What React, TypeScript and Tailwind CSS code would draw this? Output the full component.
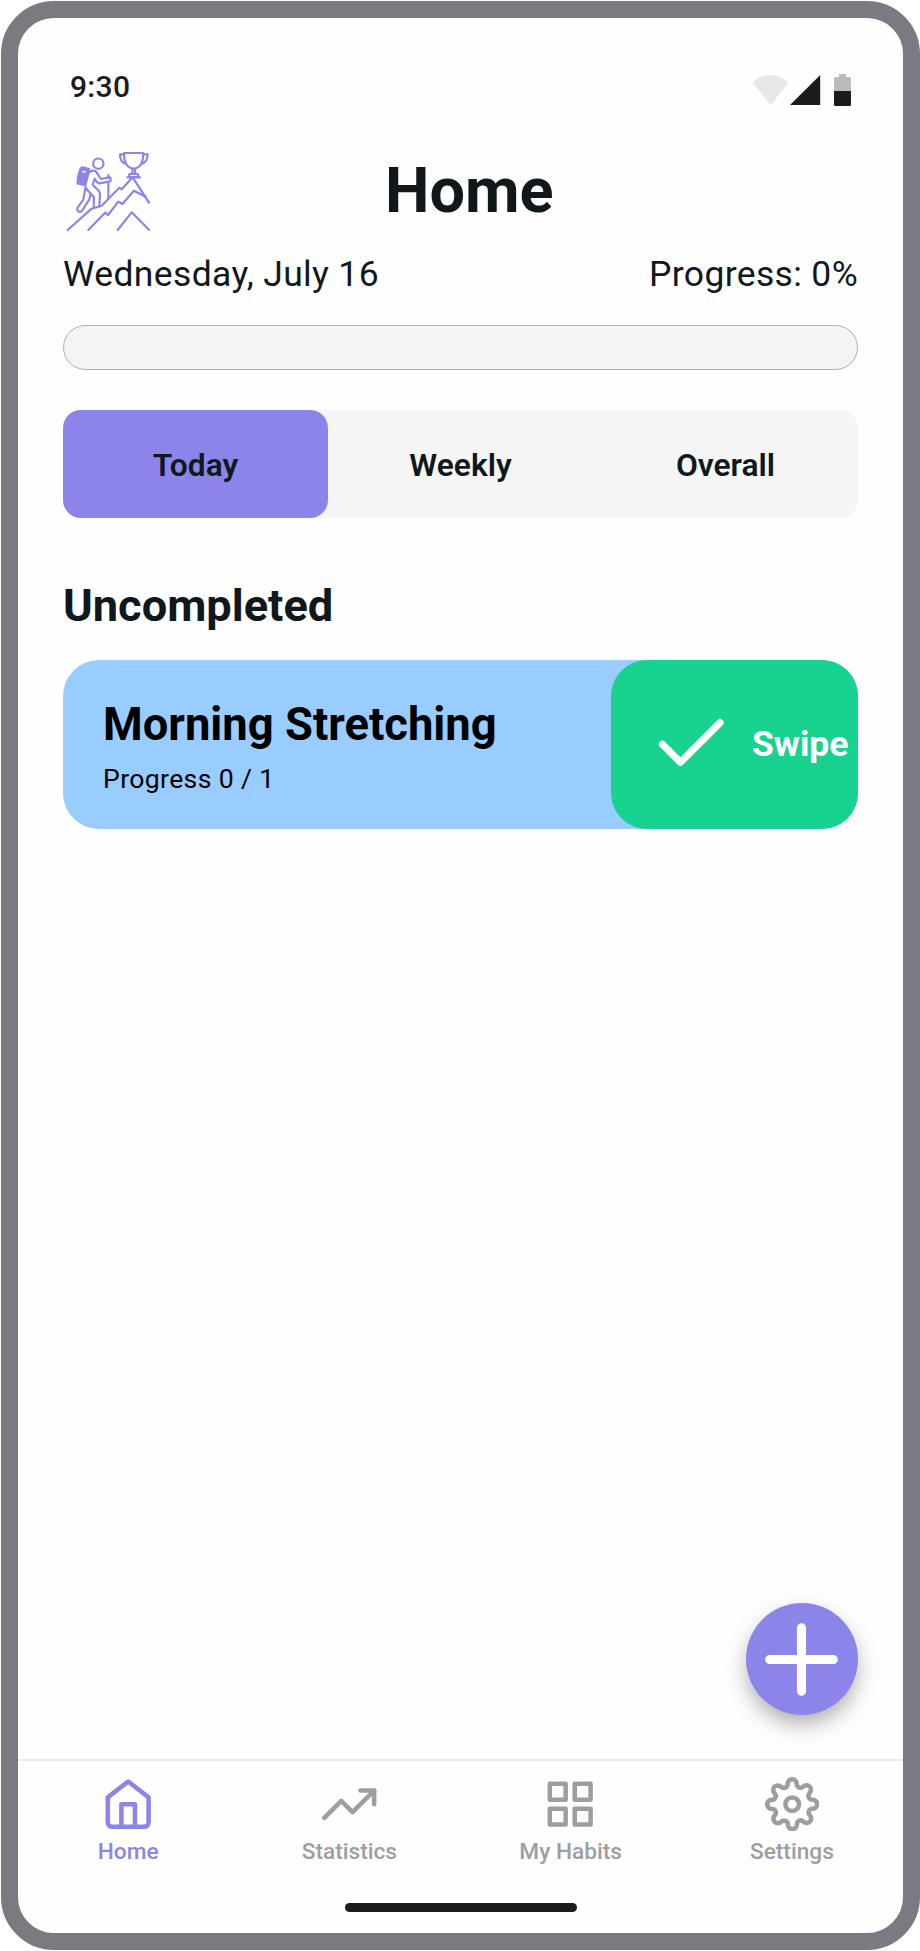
import type { ReactNode } from "react";

function HikerLogo() {
  return (
    <svg className="h-[95px] w-[95px] shrink-0 text-[#8b85ea]" viewBox="0 0 285 285" fill="none" stroke="currentColor" strokeWidth="6.5" strokeLinecap="round" strokeLinejoin="round">
      <path d="M23 255 95 191 125 182 178 128 185 133 218 97 267 173" />
      <path d="M85 255 135 203 144 210 175 170 187 177 222 137 257 155" />
      <path d="M173 255 215 202 267 254" />
      <path d="M192 24h58c0 26-7 45-29 47-22-2-29-21-29-47z" />
      <path d="M192 28h-12c0 15 5 26 18 28M250 28h13c0 15-6 26-19 28" />
      <path d="M217 72v14M225 72v14M208 87h26v9h-26zM202 97h38" />
      <circle cx="115" cy="56" r="15.5" />
      <path d="M145 90v8M145 112v48" />
      <path d="M68 67 87 72 74 120 53 115Q52 98 60 76 62 67 68 67z" fill="currentColor" />
      <path d="M68 79l8 2" stroke="#fff" strokeWidth="4" />
      <path d="M86 84c5-9 20-10 24-1l13 19 24-5c7 0 7 12 0 13l-29 5c-5 0-9-5-14-14l-6 18 18 18c4 4 4 8 4 12l-2 35M86 84 76 120c-1 8 2 11 6 15l20 22-1 32" />
      <path d="M76 131 70 163 53 188c-6 11 8 17 14 8l21-33 4-17" />
    </svg>
  );
}

function Icon({ children, className }: { children: ReactNode; className: string }) {
  return (
    <svg className={className} viewBox="0 0 24 24" fill="none" stroke="currentColor" strokeWidth="2" strokeLinecap="round" strokeLinejoin="round">
      {children}
    </svg>
  );
}

const navItems = [
  {
    label: "Home",
    color: "text-[#8b85ea]",
    icon: (
      <>
        <path d="m3 9 9-7 9 7v11a2 2 0 0 1-2 2H5a2 2 0 0 1-2-2z" />
        <polyline points="9 22 9 12 15 12 15 22" />
      </>
    ),
  },
  {
    label: "Statistics",
    color: "text-[#9e9e9e]",
    icon: (
      <>
        <polyline points="23 6 13.5 15.5 8.5 10.5 1 18" />
        <polyline points="17 6 23 6 23 12" />
      </>
    ),
  },
  {
    label: "My Habits",
    color: "text-[#9e9e9e]",
    icon: (
      <>
        <rect x="3" y="3" width="7" height="7" />
        <rect x="14" y="3" width="7" height="7" />
        <rect x="14" y="14" width="7" height="7" />
        <rect x="3" y="14" width="7" height="7" />
      </>
    ),
  },
  {
    label: "Settings",
    color: "text-[#9e9e9e]",
    icon: (
      <>
        <circle cx="12" cy="12" r="3" />
        <path d="M19.4 15a1.65 1.65 0 0 0 .33 1.82l.06.06a2 2 0 0 1 0 2.83 2 2 0 0 1-2.83 0l-.06-.06a1.65 1.65 0 0 0-1.82-.33 1.65 1.65 0 0 0-1 1.51V21a2 2 0 0 1-2 2 2 2 0 0 1-2-2v-.09A1.65 1.65 0 0 0 9 19.4a1.65 1.65 0 0 0-1.82.33l-.06.06a2 2 0 0 1-2.83 0 2 2 0 0 1 0-2.83l.06-.06a1.65 1.65 0 0 0 .33-1.82 1.65 1.65 0 0 0-1.51-1H3a2 2 0 0 1-2-2 2 2 0 0 1 2-2h.09A1.65 1.65 0 0 0 4.6 9a1.65 1.65 0 0 0-.33-1.82l-.06-.06a2 2 0 0 1 0-2.83 2 2 0 0 1 2.83 0l.06.06a1.65 1.65 0 0 0 1.82.33H9a1.65 1.65 0 0 0 1-1.51V3a2 2 0 0 1 2-2 2 2 0 0 1 2 2v.09a1.65 1.65 0 0 0 1 1.51 1.65 1.65 0 0 0 1.82-.33l.06-.06a2 2 0 0 1 2.83 0 2 2 0 0 1 0 2.83l-.06.06a1.65 1.65 0 0 0-.33 1.82V9a1.65 1.65 0 0 0 1.51 1H21a2 2 0 0 1 2 2 2 2 0 0 1-2 2h-.09a1.65 1.65 0 0 0-1.51 1z" />
      </>
    ),
  },
];

export default function App() {
  return (
    <div className="h-[1951px] w-[920px] bg-white pt-px pl-px font-['Roboto',sans-serif] text-[#11181c]">
      <div className="flex h-[1949px] w-[919px] flex-col rounded-[53px] border-[17px] border-[#7d7983] bg-[#fefefe]">
        <div className="mt-[41px] flex h-[54px] items-center justify-between pr-[52px] pl-[52px]">
          <span className="text-[30px] font-medium tracking-[0.3px] text-[#1d1b20]">9:30</span>
          <svg className="mt-[7px] h-[32px] w-[100px]" viewBox="0 0 100 32">
            <path d="M1.7 8.7C11.5-1.3 28-1.3 37.7 8.7L19.5 31z" fill="#e8e8e8" />
            <path d="M39 31 69.2 1v30z" fill="#1d1b20" />
            <path d="M88 0h7v3h3.500q1.500 0 1.500 1.500V17H83V4.500Q83 3 84.500 3H88z" fill="#bbbabc" />
            <path d="M83 17h17v13.500q0 1.500-1.500 1.500h-14Q83 32 83 30.500z" fill="#1d1b20" />
          </svg>
        </div>

        <header className="mt-[32px] flex h-[95px] pl-[42px]">
          <HikerLogo />
          <h1 className="ml-[230px] text-[63px] leading-[91px] font-bold">Home</h1>
        </header>

        <main className="flex flex-1 flex-col px-[45px]">
          <div className="flex h-[69px] items-center justify-between text-[35.5px] tracking-[0.35px]">
            <span>Wednesday, July 16</span>
            <span>Progress: 0%</span>
          </div>
          <div className="mt-[16px] h-[45px] rounded-full border border-[#b0b0b0] bg-[#f4f4f4]" />

          <div className="mt-[40px] grid h-[108px] grid-cols-3 rounded-[18px] bg-[#f5f5f5] text-[31.75px] font-semibold">
            <button className="rounded-[18px] bg-[#8b85ea] pt-[4px]">Today</button>
            <button className="pt-[4px]">Weekly</button>
            <button className="pt-[4px]">Overall</button>
          </div>

          <h2 className="mt-[61px] h-[54px] text-[45.2px] leading-[54px] font-bold">Uncompleted</h2>

          <div className="mt-[27px] flex h-[169px] justify-between rounded-[36px] bg-[#99ccff]">
            <div className="pt-[37px] pl-[40px] text-black">
              <div className="text-[45.36px] leading-[56px] font-bold">Morning Stretching</div>
              <div className="mt-[8px] text-[26.6px] leading-[36px] tracking-[0.35px]">Progress 0 / 1</div>
            </div>
            <div className="flex w-[247px] items-center rounded-[36px] bg-[#18d28f] pl-[36.5px] text-white">
              <Icon className="h-[86.5px] w-[86.5px] shrink-0">
                <polyline points="20 6 9 17 4 12" />
              </Icon>
              <span className="ml-[18px] text-[35.5px] font-bold">Swipe</span>
            </div>
          </div>

          <button className="mt-auto mb-[44px] flex h-[112.5px] w-[112.5px] items-center justify-center self-end rounded-full bg-[#8b85ea] pt-[2px] text-white shadow-[0_10px_22px_-2px_rgba(0,0,0,0.34)]">
            <Icon className="h-[109px] w-[109px] shrink-0">
              <path d="M12 5v14M5 12h14" />
            </Icon>
          </button>
        </main>

        <nav className="flex h-[174px] shrink-0 flex-col items-center border-t-2 border-[#ebebeb]">
          <div className="-ml-px grid w-full grid-cols-4">
            {navItems.map((item) => (
              <a key={item.label} className={item.color + " flex flex-col items-center pt-[15.5px]"}>
                <Icon className="h-[54.4px] w-[54.4px]">{item.icon}</Icon>
                <span className="mt-[7.1px] text-[22.68px] leading-[28px] font-medium">{item.label}</span>
              </a>
            ))}
          </div>
          <div className="mt-[37px] h-[9px] w-[232px] rounded-full bg-[#1d1b20]" />
        </nav>
      </div>
    </div>
  );
}
